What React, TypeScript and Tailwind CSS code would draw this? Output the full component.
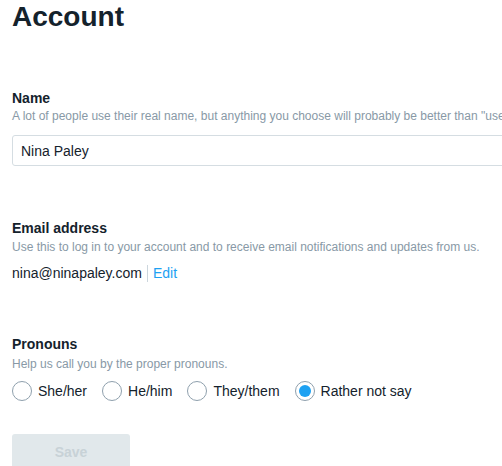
import React, { useState } from 'react';

const pronouns = ['She/her', 'He/him', 'They/them', 'Rather not say'];

export default function App() {
  const [pronoun, setPronoun] = useState('Rather not say');

  return (
    <div
      className="h-[466px] w-full overflow-hidden bg-white pl-3 text-[#14222c]"
      style={{ fontFamily: '"Liberation Sans", Arial, sans-serif' }}
    >
      <h1 className="pt-[3px] text-[28px] font-bold leading-[28px]">Account</h1>

      {/* Name */}
      <div className="mt-[59px]">
        <div className="text-[14px] font-bold leading-4">Name</div>
        <p className="mt-[3px] whitespace-nowrap text-[12px] leading-[14px] text-[#8899a6]">
          A lot of people use their real name, but anything you choose will probably be better than "user12345".
        </p>
        <input
          className="mt-[12px] h-[31px] w-[640px] rounded-[3px] border border-[#d5dde2] px-2 text-[14px] text-[#14222c] outline-none"
          defaultValue="Nina Paley"
        />
      </div>

      {/* Email */}
      <div className="mt-[54px]">
        <div className="text-[14px] font-bold leading-4">Email address</div>
        <p className="mt-[4px] whitespace-nowrap text-[12px] leading-[14px] text-[#8899a6]">
          Use this to log in to your account and to receive email notifications and updates from us.
        </p>
        <div className="mt-[9px] flex items-center text-[14px] leading-5">
          <span>nina@ninapaley.com</span>
          <span className="mx-[5px] h-[17px] w-px bg-[#ccd6dd]" />
          <a className="text-[#1da1f2]">Edit</a>
        </div>
      </div>

      {/* Pronouns */}
      <div className="mt-[53px]">
        <div className="text-[14px] font-bold leading-4">Pronouns</div>
        <p className="mt-[5px] whitespace-nowrap text-[12px] leading-[14px] text-[#8899a6]">
          Help us call you by the proper pronouns.
        </p>
        <div className="mt-[10px] flex items-center">
          {pronouns.map((p) => {
            const checked = pronoun === p;
            return (
              <label
                key={p}
                onClick={() => setPronoun(p)}
                className="mr-[15px] flex cursor-pointer items-center text-[14px] leading-5"
              >
                <span className="flex h-5 w-5 items-center justify-center rounded-full border border-[#8fa0ad] bg-white">
                  {checked && <span className="h-3 w-3 rounded-full bg-[#1da1f2]" />}
                </span>
                <span className="ml-[6px]">{p}</span>
              </label>
            );
          })}
        </div>
      </div>

      <button
        disabled
        className="mt-[33px] h-9 w-[118px] rounded-[3px] bg-[#e1e8eb] text-[14px] font-bold text-[#c8d2d7]"
      >
        Save
      </button>
    </div>
  );
}
